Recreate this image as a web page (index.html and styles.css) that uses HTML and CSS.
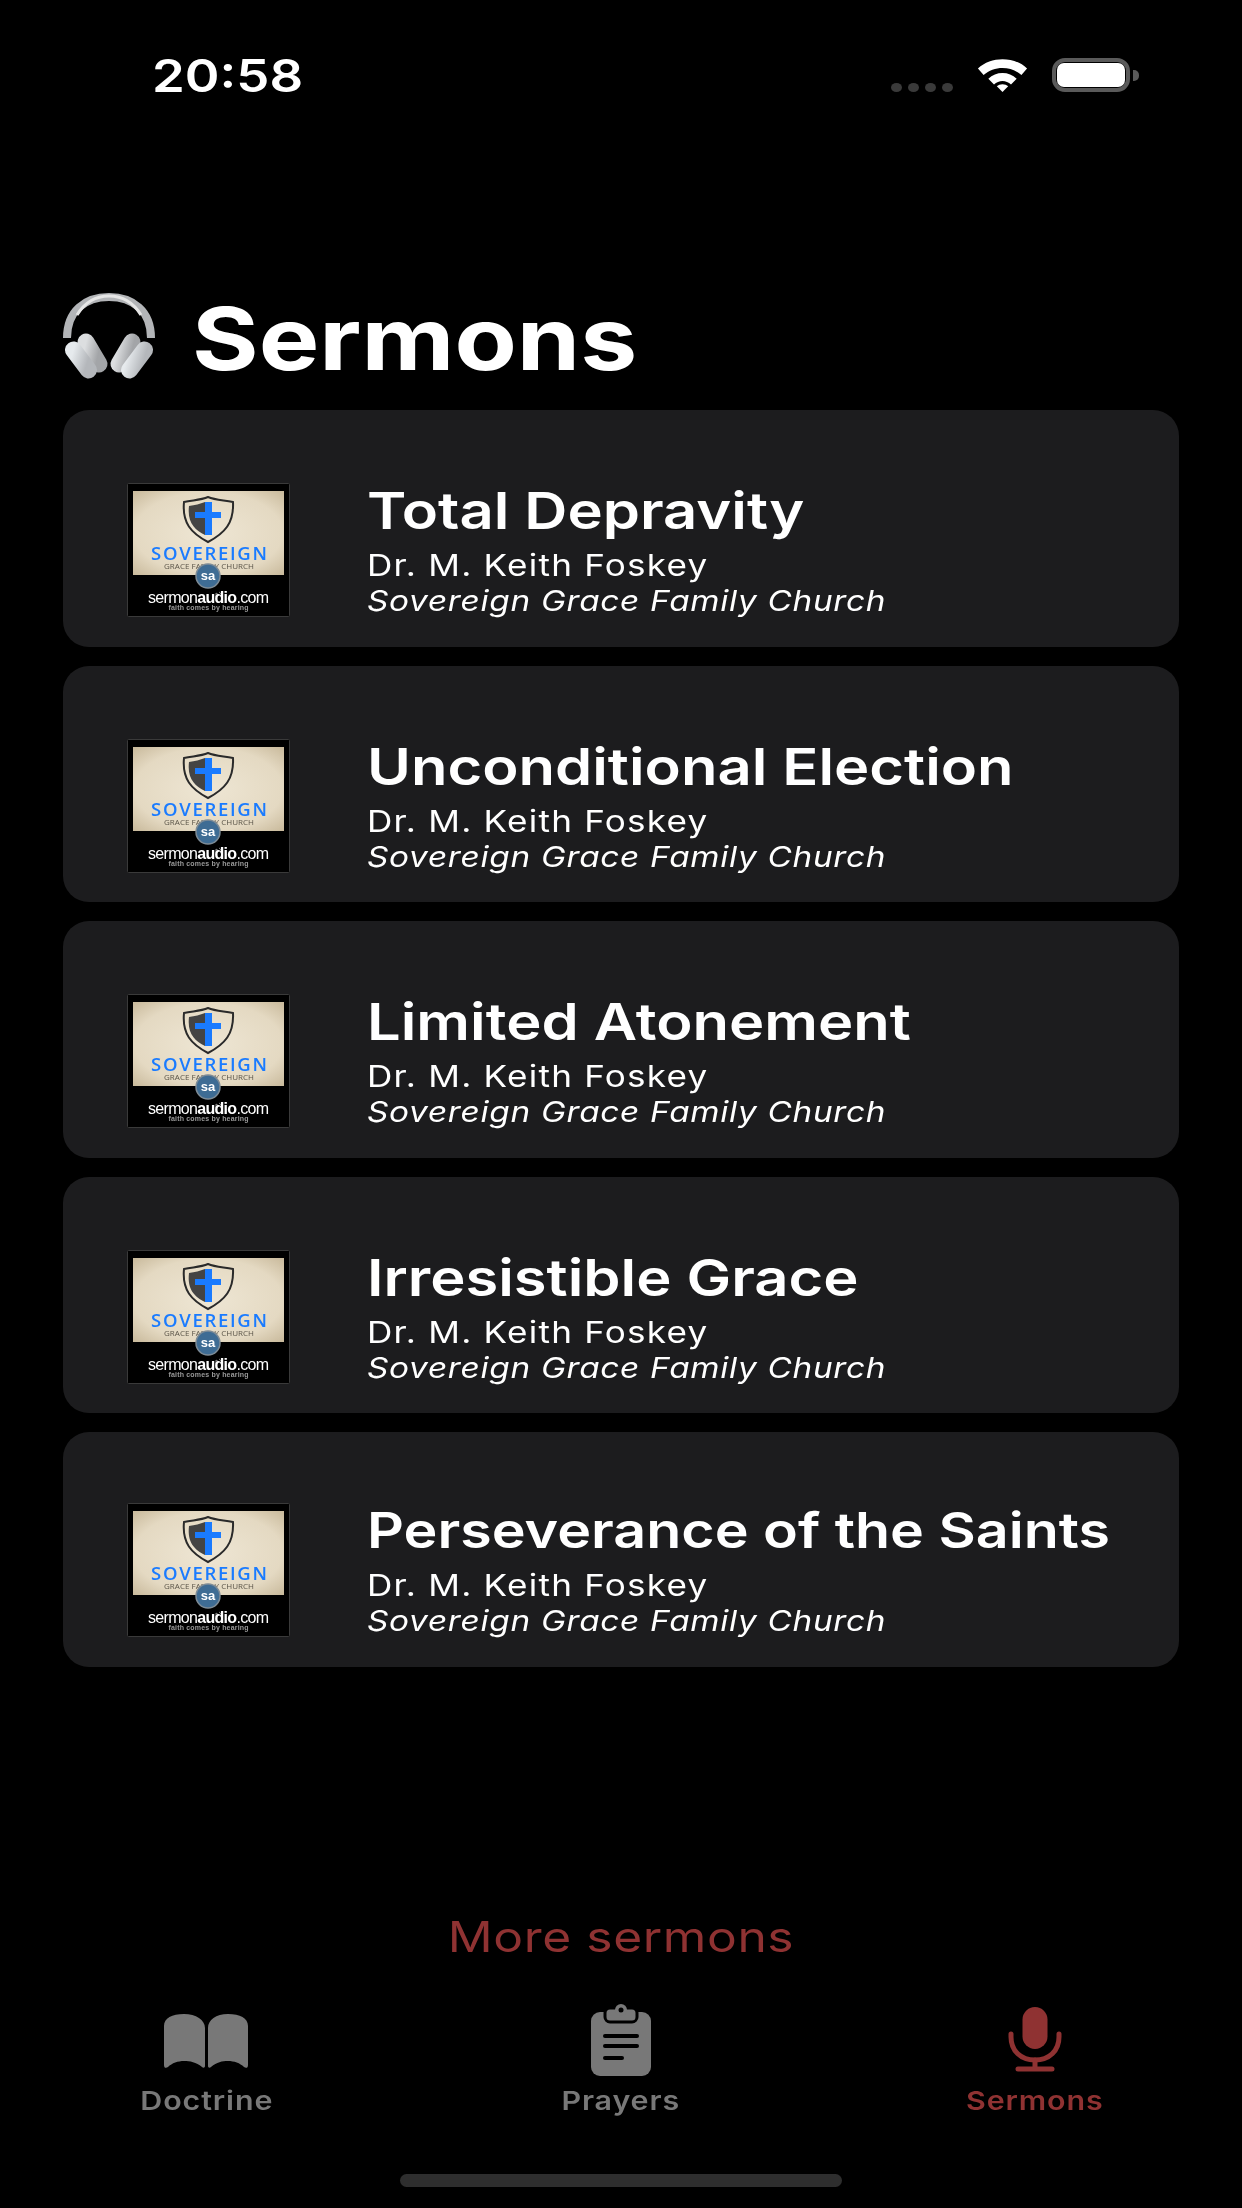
FILE: index.html
```html
<!DOCTYPE html>
<html lang="en">
<head>
    <meta charset="UTF-8">
    <meta name="viewport" content="width=device-width, initial-scale=1.0">
    <title>Sermons</title>
    <link rel="stylesheet" href="styles.css">
</head>
<body>
    <svg class="defs" width="0" height="0">
        <defs>
            <radialGradient id="paper" cx="50%" cy="50%" r="70%">
                <stop offset="0" stop-color="#eee6d4"/>
                <stop offset="0.7" stop-color="#e4d9c2"/>
                <stop offset="1" stop-color="#c9ba9c"/>
            </radialGradient>
            <linearGradient id="cup" x1="0" y1="0" x2="1" y2="0.4">
                <stop offset="0" stop-color="#e6eaed"/>
                <stop offset="1" stop-color="#b4b7bb"/>
            </linearGradient>
            <linearGradient id="cupInner" x1="0" y1="0" x2="1" y2="0.4">
                <stop offset="0" stop-color="#dcdee0"/>
                <stop offset="1" stop-color="#a3a5a8"/>
            </linearGradient>
            <symbol id="thumb" viewBox="0 0 163 134">
                <rect x="0.5" y="0.5" width="162" height="133" rx="1" fill="#000" stroke="#3a3a3a"/>
                <rect x="6" y="8" width="151" height="84" fill="url(#paper)"/>
                <path d="M57 19 C67 17 74 17 81 14 C88 17 95 17 106 19 C107 40 98 50 81 59 C64 50 55 40 57 19Z" fill="none" stroke="#2a2a2a" stroke-width="2"/>
                <path d="M62 23 C68 22 73 21 78 19 L78 52 C68 47 60 40 62 23Z" fill="#444"/>
                <path d="M78 19 H85 V29 H94 V35 H85 V52 H78 V35 H68 V29 H78Z" fill="#1a7bff"/>
                <text class="thumb-name" x="82" y="77" text-anchor="middle" textLength="116">SOVEREIGN</text>
                <text class="thumb-sub" x="82" y="86" text-anchor="middle" textLength="90">GRACE FAMILY CHURCH</text>
                <circle cx="81" cy="93" r="12" fill="#3e6c94" stroke="#7d8b96" stroke-width="1.5"/>
                <text class="thumb-sa" x="81" y="97" text-anchor="middle">sa</text>
                <path d="M89 110 L89 114 L92 112Z M92 109 C94 110 95 112 94 114" fill="none" stroke="#888"/>
                <text class="thumb-logo" x="81.5" y="120" text-anchor="middle" textLength="121">sermon<tspan class="thumb-bold">audio</tspan>.com</text>
                <text class="thumb-tag" x="81.5" y="127" text-anchor="middle" textLength="80">faith comes by hearing</text>
            </symbol>
        </defs>
    </svg>

    <div class="screen">
        <div class="status-bar">
            <span class="time wide">20:58</span>
            <div class="status-icons">
                <div class="signal"><i></i><i></i><i></i><i></i></div>
                <svg class="wifi" viewBox="0 0 54 36">
                    <path d="M1 11 C15 -2 39 -2 53 11 L47 18 C36 8 18 8 7 18Z" fill="#fff"/>
                    <path d="M12 22 C20 14 34 14 42 22 L36 28 C31 23 23 23 18 28Z" fill="#fff"/>
                    <path d="M21 30 C24 27 30 27 33 30 L27 36Z" fill="#fff"/>
                </svg>
                <div class="battery"><div class="battery-fill"></div></div>
                <div class="battery-cap"></div>
            </div>
        </div>

        <h1 class="page-title">
            <svg class="headphones" viewBox="0 0 96 90">
                <path d="M6 47 C6 20 24 6 48 6 C72 6 90 20 90 47" fill="none" stroke="#b3b5b8" stroke-width="8"/>
                <path d="M16 24 C24 11 36 5 48 5 C60 5 72 11 80 24" fill="none" stroke="#e6e6e6" stroke-width="3"/>
                <path d="M25 51 L38 73" stroke="url(#cupInner)" stroke-width="17" stroke-linecap="round"/>
                <path d="M71 51 L58 73" stroke="url(#cupInner)" stroke-width="17" stroke-linecap="round"/>
                <path d="M12.5 59 L27.5 79" stroke="url(#cup)" stroke-width="17" stroke-linecap="round"/>
                <path d="M83.5 59 L68.5 79" stroke="url(#cup)" stroke-width="17" stroke-linecap="round"/>
            </svg>
            <span class="wide">Sermons</span>
        </h1>

        <div class="sermon-list">
            <div class="sermon-card">
                <svg class="thumb"><use href="#thumb"/></svg>
                <div class="sermon-text">
                    <div class="sermon-title wide">Total Depravity</div>
                    <div class="sermon-author wide">Dr. M. Keith Foskey</div>
                    <div class="sermon-church wide">Sovereign Grace Family Church</div>
                </div>
            </div>
            <div class="sermon-card">
                <svg class="thumb"><use href="#thumb"/></svg>
                <div class="sermon-text">
                    <div class="sermon-title wide">Unconditional Election</div>
                    <div class="sermon-author wide">Dr. M. Keith Foskey</div>
                    <div class="sermon-church wide">Sovereign Grace Family Church</div>
                </div>
            </div>
            <div class="sermon-card">
                <svg class="thumb"><use href="#thumb"/></svg>
                <div class="sermon-text">
                    <div class="sermon-title wide">Limited Atonement</div>
                    <div class="sermon-author wide">Dr. M. Keith Foskey</div>
                    <div class="sermon-church wide">Sovereign Grace Family Church</div>
                </div>
            </div>
            <div class="sermon-card">
                <svg class="thumb"><use href="#thumb"/></svg>
                <div class="sermon-text">
                    <div class="sermon-title wide">Irresistible Grace</div>
                    <div class="sermon-author wide">Dr. M. Keith Foskey</div>
                    <div class="sermon-church wide">Sovereign Grace Family Church</div>
                </div>
            </div>
            <div class="sermon-card sermon-card-tight">
                <svg class="thumb"><use href="#thumb"/></svg>
                <div class="sermon-text">
                    <div class="sermon-title sermon-title-fit wide">Perseverance of the Saints</div>
                    <div class="sermon-author wide">Dr. M. Keith Foskey</div>
                    <div class="sermon-church wide">Sovereign Grace Family Church</div>
                </div>
            </div>
        </div>

        <div class="more-link"><span class="wide-center">More sermons</span></div>

        <div class="tab-bar">
            <div class="tab">
                <svg class="tab-icon" viewBox="0 0 120 80">
                    <g transform="translate(-1 0)">
                        <path d="M18 26 C18 18 26 14 38 14 C50 14 59 20 59 28 V66 C59 68 57 68 56 67 C50 62 44 61 38 61 C32 61 26 63 22 67 C20 68.5 18 68 18 65Z" fill="#787878"/>
                        <path d="M102 26 C102 18 94 14 82 14 C70 14 62 20 62 28 V66 C62 68 64 68 65 67 C71 62 76 61 82 61 C88 61 94 63 98 67 C100 68.5 102 68 102 65Z" fill="#787878"/>
                    </g>
                </svg>
                <span class="tab-label wide-center">Doctrine</span>
            </div>
            <div class="tab">
                <svg class="tab-icon" viewBox="0 0 120 80">
                    <rect x="30" y="12" width="60" height="64" rx="9" fill="#787878"/>
                    <rect x="44" y="8" width="32" height="14" rx="5" fill="#787878" stroke="#000" stroke-width="3"/>
                    <circle cx="60" cy="10" r="6" fill="#787878"/>
                    <circle cx="60" cy="10" r="2.5" fill="#000"/>
                    <rect x="42" y="34" width="36" height="4" rx="2" fill="#000"/>
                    <rect x="42" y="44" width="36" height="4" rx="2" fill="#000"/>
                    <rect x="42" y="56" width="21" height="4" rx="2" fill="#000"/>
                </svg>
                <span class="tab-label wide-center">Prayers</span>
            </div>
            <div class="tab tab-active">
                <svg class="tab-icon" viewBox="0 0 120 80">
                    <rect x="47.5" y="7" width="25" height="42" rx="12.5" fill="#8f3232"/>
                    <path d="M36 34 V37 C36 51 46 60 60 60 C74 60 84 51 84 37 V34" fill="none" stroke="#8f3232" stroke-width="5" stroke-linecap="round"/>
                    <path d="M60 60 V69 M43 69 H77" fill="none" stroke="#8f3232" stroke-width="5" stroke-linecap="round"/>
                </svg>
                <span class="tab-label wide-center">Sermons</span>
            </div>
        </div>

        <div class="home-indicator"></div>
    </div>
</body>
</html>
```

FILE: styles.css
```css
* {
    box-sizing: border-box;
}
body {
    margin: 0;
    background-color: #000;
    color: #fff;
    font-family: Inter, "Liberation Sans", sans-serif;
}
.defs {
    display: block;
    height: 0;
}
.screen {
    width: 1242px;
    height: 2208px;
    overflow: hidden;
    display: flex;
    flex-direction: column;
}

/* text in the shot is stretched sideways */
.wide {
    display: block;
    transform: scaleX(1.17);
    transform-origin: left center;
    white-space: nowrap;
}
.wide-center {
    display: block;
    transform: scaleX(1.17);
    white-space: nowrap;
}

.status-bar {
    height: 114px;
    padding: 48px 103px 0 152px;
    display: flex;
    justify-content: space-between;
    align-items: flex-start;
}
.time {
    font-size: 45px;
    font-weight: 600;
    line-height: 56px;
}
.status-icons {
    margin-top: 10px;
    display: flex;
    align-items: flex-end;
    height: 34px;
}
.signal {
    display: flex;
    gap: 6px;
    margin-right: 23px;
}
.signal i {
    width: 11px;
    height: 9px;
    border-radius: 50%;
    background-color: #3a3a3a;
}
.wifi {
    width: 53px;
    height: 34px;
}
.battery {
    width: 78px;
    height: 34px;
    margin-left: 23px;
    padding: 1px;
    border: 4px solid #5a5a5a;
    border-radius: 13px;
}
.battery-fill {
    height: 100%;
    background-color: #fff;
    border-radius: 7px;
}
.battery-cap {
    width: 6px;
    height: 11px;
    margin: 0 0 11px 3px;
    background-color: #5a5a5a;
    border-radius: 0 5px 5px 0;
}

.page-title {
    margin: 0;
    height: 296px;
    padding: 175px 0 0 61px;
    display: flex;
    align-items: flex-start;
    gap: 35px;
    font-size: 87px;
    font-weight: 700;
    line-height: 100px;
}
.headphones {
    width: 96px;
    height: 90px;
    margin-top: 2px;
}

.sermon-list {
    margin: 0 63px;
    display: flex;
    flex-direction: column;
    gap: 19px;
}
.sermon-card {
    height: 236.5px;
    padding: 73px 0 0 64px;
    display: flex;
    align-items: flex-start;
    gap: 77px;
    background-color: #1c1c1e;
    border-radius: 26px;
}
.sermon-card-tight {
    height: 235px;
    padding-top: 71px;
}
.thumb {
    width: 163px;
    height: 134px;
    flex: none;
    filter: blur(0.5px);
}
.thumb-name {
    font-family: "Open Sans", sans-serif;
    font-size: 18.5px;
    font-weight: 600;
    fill: #1a7bff;
}
.thumb-sub {
    font-family: "Open Sans", sans-serif;
    font-size: 8px;
    fill: #5a5448;
}
.thumb-sa {
    font-family: "Liberation Sans", sans-serif;
    font-size: 13px;
    font-weight: 700;
    fill: #fff;
}
.thumb-logo {
    font-family: "Liberation Sans", sans-serif;
    font-size: 16px;
    fill: #fff;
}
.thumb-bold {
    font-weight: 700;
}
.thumb-tag {
    font-family: "Liberation Sans", sans-serif;
    font-size: 7px;
    font-weight: 700;
    fill: #999;
}
.sermon-text {
    margin-top: -8px;
}
.sermon-title {
    font-size: 51px;
    font-weight: 600;
    line-height: 72px;
}
.sermon-title-fit {
    font-size: 49px;
}
.sermon-author {
    font-size: 30px;
    letter-spacing: 1.05px;
    line-height: 36px;
}
.sermon-church {
    font-size: 28.5px;
    font-style: italic;
    letter-spacing: 0.6px;
    line-height: 35px;
}

.more-link {
    margin-top: 245px;
    display: flex;
    justify-content: center;
    color: #8f3232;
    font-size: 42.5px;
    letter-spacing: 0.5px;
    line-height: 50px;
}
.tab-bar {
    margin-top: 38px;
    display: flex;
    justify-content: space-around;
}
.tab {
    width: 414px;
    display: flex;
    flex-direction: column;
    align-items: center;
    color: #787878;
}
.tab-active {
    color: #8f3232;
}
.tab-icon {
    width: 120px;
    height: 80px;
    overflow: visible;
}
.tab-label {
    margin-top: 6px;
    font-size: 26px;
    font-weight: 600;
    letter-spacing: 0.75px;
    line-height: 30px;
}
.home-indicator {
    width: 442px;
    height: 13px;
    margin: 58px auto 0;
    background-color: #2e2e2e;
    border-radius: 7px;
}
```
